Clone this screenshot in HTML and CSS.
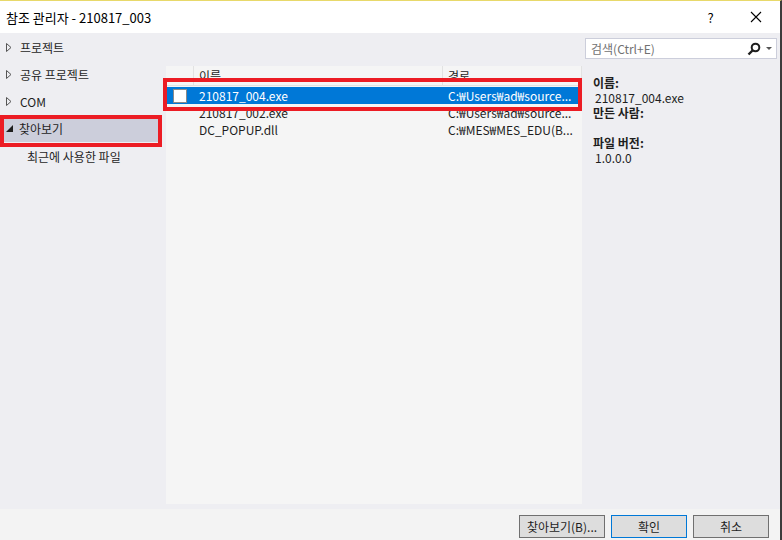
FILE: index.html
```html
<!DOCTYPE html>
<html>
<head>
    <title>참조 관리자</title>
    <link rel="stylesheet" href="styles.css">
</head>
<body>
    <div class="window">
        <div class="titlebar">
            <span class="title">참조 관리자 - 210817_003</span>
            <span class="title-btn help">?</span>
            <span class="title-btn close">
                <svg width="12" height="12" viewBox="0 0 12 12"><path d="M1 1L11 11M11 1L1 11" stroke="#000" stroke-width="1.1"/></svg>
            </span>
        </div>
        <div class="main">
            <div class="nav">
                <div class="nav-item"><svg class="tri" width="6" height="9" viewBox="0 0 6 9"><path d="M0.5 0.5L5 4.5L0.5 8.5Z" fill="none" stroke="#555"/></svg>프로젝트</div>
                <div class="nav-item"><svg class="tri" width="6" height="9" viewBox="0 0 6 9"><path d="M0.5 0.5L5 4.5L0.5 8.5Z" fill="none" stroke="#555"/></svg>공유 프로젝트</div>
                <div class="nav-item"><svg class="tri" width="6" height="9" viewBox="0 0 6 9"><path d="M0.5 0.5L5 4.5L0.5 8.5Z" fill="none" stroke="#555"/></svg>COM</div>
                <div class="nav-item selected"><svg class="tri-open" width="7" height="7" viewBox="0 0 7 7"><path d="M7 0V7H0Z" fill="#1e1e1e"/></svg>찾아보기</div>
                <div class="nav-sub">최근에 사용한 파일</div>
                <div class="mark mark-nav"></div>
            </div>
            <div class="list-area">
                <div class="list">
                    <div class="list-head">
                        <div class="col-check"></div>
                        <div class="col-name">이름</div>
                        <div class="col-path">경로</div>
                    </div>
                    <div class="row active">
                        <div class="col-check"><span class="box"></span></div>
                        <div class="col-name">210817_004.exe</div>
                        <div class="col-path">C:₩Users₩ad₩source...</div>
                    </div>
                    <div class="row">
                        <div class="col-check"></div>
                        <div class="col-name">210817_002.exe</div>
                        <div class="col-path">C:₩Users₩ad₩source...</div>
                    </div>
                    <div class="row">
                        <div class="col-check"></div>
                        <div class="col-name">DC_POPUP.dll</div>
                        <div class="col-path">C:₩MES₩MES_EDU(B...</div>
                    </div>
                </div>
                <div class="mark mark-row"></div>
            </div>
            <div class="side">
                <div class="search">
                    <span class="search-text">검색(Ctrl+E)</span>
                    <svg class="search-icon" width="14" height="14" viewBox="0 0 14 14">
                        <circle cx="8.5" cy="5.5" r="3.8" fill="none" stroke="#1e1e1e" stroke-width="2"/>
                        <path d="M6 8L1.5 12.5" stroke="#1e1e1e" stroke-width="2.4"/>
                    </svg>
                    <svg class="search-drop" width="6" height="4" viewBox="0 0 6 4"><path d="M0 0H6L3 3Z" fill="#555"/></svg>
                </div>
                <div class="details">
                    <div class="label">이름:</div>
                    <div class="value">210817_004.exe</div>
                    <div class="label">만든 사람:</div>
                    <div class="value"></div>
                    <div class="label">파일 버전:</div>
                    <div class="value">1.0.0.0</div>
                </div>
            </div>
        </div>
        <div class="footer">
            <button class="btn">찾아보기(B)...</button>
            <button class="btn primary">확인</button>
            <button class="btn">취소</button>
        </div>
    </div>
</body>
</html>
```
FILE: styles.css
```css
body {
    margin: 0;
    font-family: "Noto Sans CJK KR", "Noto Sans", sans-serif;
    font-size: 12px;
    color: #1e1e1e;
    background: #fff;
}
.window {
    width: 782px;
    height: 540px;
    box-sizing: border-box;
    border-top: 1px solid #e8d96a;
    border-right: 2px solid #3c3c3c;
    display: flex;
    flex-direction: column;
    overflow: hidden;
}
.titlebar {
    height: 32px;
    background: #fff;
    display: flex;
    align-items: center;
    padding-left: 6px;
    font-size: 13px;
}
.title {
    flex: 1;
    color: #000;
}
.title-btn {
    width: 45px;
    text-align: center;
    color: #000;
}
.help {
    font-size: 13px;
}
.close {
    display: flex;
    justify-content: center;
    align-items: center;
    margin-right: 2px;
}
.main {
    height: 476px;
    background: #eeeef2;
    display: flex;
}
.nav {
    width: 166px;
    padding-top: 1px;
    position: relative;
}
.nav-item {
    height: 27px;
    line-height: 27px;
    display: flex;
    align-items: center;
    padding-left: 6px;
    margin-right: 8px;
}
.nav-item.selected {
    background: #cccedb;
}
.tri {
    margin-right: 8px;
}
.tri-open {
    margin-right: 6px;
}
.nav-sub {
    height: 30px;
    line-height: 30px;
    padding-left: 27px;
}
.mark {
    position: absolute;
    border: 4px solid #ec1c24;
    box-sizing: border-box;
}
.mark-nav {
    left: 0;
    top: 82px;
    width: 162px;
    height: 32px;
}
.list-area {
    width: 416px;
    padding-top: 33px;
    padding-bottom: 5px;
    position: relative;
}
.list {
    height: 100%;
    background: #f5f5f5;
}
.list-head {
    display: flex;
    height: 19px;
    line-height: 19px;
    border-bottom: 1px solid #e2e2e2;
    color: #1e1e1e;
}
.list-head > div {
    border-right: 1px solid #e2e2e2;
}
.row {
    display: flex;
    height: 17px;
    line-height: 17px;
}
.row.active {
    background: #0078d7;
    color: #fff;
    margin-top: 1px;
}
.col-check {
    width: 28px;
    display: flex;
    align-items: center;
    padding-left: 7px;
    box-sizing: border-box;
}
.col-name {
    width: 249px;
    padding-left: 5px;
    box-sizing: border-box;
}
.col-path {
    flex: 1;
    padding-left: 5px;
    box-sizing: border-box;
    white-space: nowrap;
    overflow: hidden;
}
.box {
    width: 12px;
    height: 12px;
    background: #fff;
    border: 1px solid #8a8a8a;
}
.mark-row {
    left: -3px;
    top: 45px;
    width: 419px;
    height: 33px;
}
.side {
    flex: 1;
    padding: 5px 3px 0 3px;
}
.search {
    height: 21px;
    background: #fff;
    border: 1px solid #cccedb;
    display: flex;
    align-items: center;
    padding-left: 5px;
    box-sizing: border-box;
}
.search-text {
    flex: 1;
    color: #717171;
}
.search-icon {
    margin-right: 5px;
}
.search-drop {
    margin-right: 4px;
}
.details {
    padding: 16px 0 0 8px;
    line-height: 15px;
}
.label {
    font-weight: bold;
}
.value {
    padding-left: 2px;
    min-height: 15px;
}
.footer {
    flex: 1;
    background: #f3f3f3;
    display: flex;
    justify-content: flex-end;
    align-items: flex-start;
    padding: 6px 11px 0 0;
    gap: 6px;
}
.btn {
    height: 23px;
    width: 76px;
    font-family: inherit;
    font-size: 12px;
    color: #1e1e1e;
    background: #dddddd;
    border: 1px solid #707070;
    padding: 0;
}
.btn:first-child {
    width: 86px;
}
.btn.primary {
    border: 1px solid #0078d7;
}
```
